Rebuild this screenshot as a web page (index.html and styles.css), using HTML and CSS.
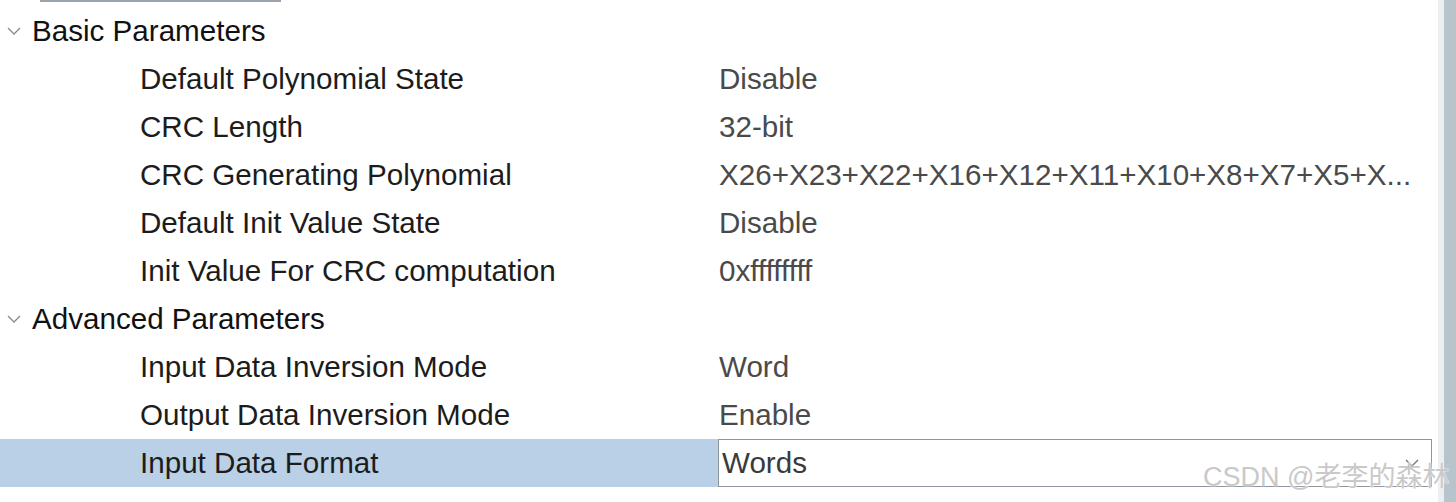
FILE: index.html
```html
<!DOCTYPE html>
<html>
<head>
<meta charset="utf-8">
<link rel="stylesheet" href="styles.css">
</head>
<body>
<div class="panel">
  <div class="tree">
    <div class="tabline"></div>
    <div class="row group">
      <span class="chev"><svg width="14" height="9" viewBox="0 0 14 9"><path d="M1 1 L7 7 L13 1" fill="none" stroke="#8a8a8a" stroke-width="1.3"/></svg></span>
      <span class="glabel">Basic Parameters</span>
    </div>
    <div class="row item"><span class="label">Default Polynomial State</span><span class="value">Disable</span></div>
    <div class="row item"><span class="label">CRC Length</span><span class="value">32-bit</span></div>
    <div class="row item"><span class="label">CRC Generating Polynomial</span><span class="value">X26+X23+X22+X16+X12+X11+X10+X8+X7+X5+X...</span></div>
    <div class="row item"><span class="label">Default Init Value State</span><span class="value">Disable</span></div>
    <div class="row item"><span class="label">Init Value For CRC computation</span><span class="value">0xffffffff</span></div>
    <div class="row group">
      <span class="chev"><svg width="14" height="9" viewBox="0 0 14 9"><path d="M1 1 L7 7 L13 1" fill="none" stroke="#8a8a8a" stroke-width="1.3"/></svg></span>
      <span class="glabel">Advanced Parameters</span>
    </div>
    <div class="row item"><span class="label">Input Data Inversion Mode</span><span class="value">Word</span></div>
    <div class="row item"><span class="label">Output Data Inversion Mode</span><span class="value">Enable</span></div>
    <div class="row item selected">
      <span class="label">Input Data Format</span>
      <span class="editor"><span class="etext">Words</span><svg class="drop" width="14" height="9" viewBox="0 0 14 9"><path d="M1 1 L7 7 L13 1" fill="none" stroke="#777" stroke-width="1.4"/></svg></span>
    </div>
  </div>
  <div class="gutter"></div>
  <div class="scrollbar"></div>
  <div class="watermark">CSDN @老李的森林</div>
</div>
</body>
</html>
```
FILE: styles.css
```css
html, body {
  margin: 0;
  padding: 0;
  background: #ffffff;
}
body {
  font-family: "Liberation Sans", Arial, "Noto Sans CJK SC", sans-serif;
}
.panel {
  position: relative;
  display: flex;
  width: 1456px;
  height: 502px;
  overflow: hidden;
}
.tree {
  flex: 1;
}
.tabline {
  margin-left: 40px;
  width: 241px;
  height: 2px;
  background: #9aa2ab;
  margin-bottom: 5px;
}
.row {
  display: flex;
  align-items: center;
  height: 48px;
  font-size: 29.6px;
  white-space: nowrap;
}
.chev {
  width: 32px;
  display: flex;
  justify-content: center;
  padding-right: 4px;
  box-sizing: border-box;
}
.glabel {
  color: #111111;
}
.label {
  box-sizing: border-box;
  width: 718px;
  padding-left: 140px;
  color: #1c1c1c;
  height: 48px;
  line-height: 48px;
}
.value {
  padding-left: 1px;
  color: #4a4a4a;
}
.selected .label {
  background: #b9d0e7;
  height: 48px;
}
.editor {
  box-sizing: border-box;
  width: 714px;
  height: 48px;
  border: 1px solid #8e959d;
  background: #ffffff;
  display: flex;
  align-items: center;
  padding-left: 3px;
  color: #3a3a3a;
}
.etext {
  flex: 1;
}
.drop {
  margin-right: 12px;
}
.gutter {
  width: 6px;
  background: #eceff2;
}
.scrollbar {
  width: 12px;
  background: #b8c4cc;
}
.watermark {
  position: absolute;
  left: 1203px;
  top: 455px;
  font-size: 27px;
  color: #c9c9c9;
  text-shadow: 0 0 1px #ffffff, 0 0 2px #ffffff;
  white-space: nowrap;
}
```
